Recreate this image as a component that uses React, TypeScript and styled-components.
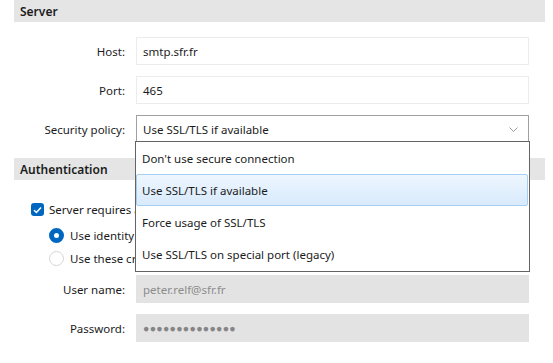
import styled, {createGlobalStyle} from "styled-components";

const GlobalStyle = createGlobalStyle`
  html, body {
    margin: 0;
    padding: 0;
    background: #ffffff;
  }
  body {
    font-family: "Noto Sans", "Open Sans", sans-serif;
    font-size: 11.5px;
    color: #1b1b1b;
  }
`;

const Page = styled.div`
  position: relative;
  width: 553px;
  height: 363px;
  overflow: hidden;
  padding: 0 8px 0 14px;
  box-sizing: border-box;
`;

const SectionHeader = styled.div<{ $gap?: number }>`
  height: 22px;
  margin-top: ${(p) => p.$gap ?? 0}px;
  background: #e5e5e5;
  padding-left: 6px;
  display: flex;
  align-items: center;
  font-size: 12px;
  font-weight: 600;
`;

const Form = styled.div<{ $top: number }>`
  display: grid;
  grid-template-columns: 111px 393px;
  column-gap: 11px;
  row-gap: 11px;
  align-items: center;
  padding-top: ${(p) => p.$top}px;
`;

const Label = styled.label`
  text-align: right;
`;

const Field = styled.div<{ $disabled?: boolean; $select?: boolean }>`
  height: 28px;
  box-sizing: border-box;
  display: flex;
  align-items: center;
  justify-content: space-between;
  padding: 0 10px 0 6px;
  border: 1px solid ${(p) => (p.$select ? "#a0a0a0" : p.$disabled ? "#e3e3e3" : "#ececec")};
  background: ${(p) => (p.$disabled ? "#e3e3e3" : "#ffffff")};
  color: ${(p) => (p.$disabled ? "#8c8c8c" : "#1b1b1b")};
`;

const Dots = styled.span`
  letter-spacing: 0.3px;
  font-size: 10.5px;
  color: #858585;
`;

const AuthBlock = styled.div`
  padding: 23px 0 0 17px;
  display: flex;
  flex-direction: column;
`;

const OptionRow = styled.div<{ $indent?: number; $top?: number }>`
  display: flex;
  align-items: center;
  gap: 5px;
  height: 13px;
  margin-left: ${(p) => p.$indent ?? 0}px;
  margin-top: ${(p) => p.$top ?? 0}px;
`;

const CheckBox = styled.span`
  width: 13px;
  height: 13px;
  border-radius: 3px;
  background: #0067c0;
  display: flex;
  align-items: center;
  justify-content: center;
`;

const Radio = styled.span<{ $checked?: boolean }>`
  width: ${(p) => (p.$checked ? 5 : 13)}px;
  height: ${(p) => (p.$checked ? 5 : 13)}px;
  border-radius: 50%;
  border: ${(p) => (p.$checked ? "5px solid #0067c0" : "1px solid #d6d6d6")};
  background: #ffffff;
  margin-right: 1px;
`;

const Dropdown = styled.div`
  position: absolute;
  left: 135px;
  top: 141px;
  width: 395px;
  box-sizing: border-box;
  border: 1px solid #646464;
  background: #ffffff;
  padding: 0 1px 1px 0;
`;

const Item = styled.div<{ $active?: boolean }>`
  height: 32px;
  box-sizing: border-box;
  display: flex;
  align-items: center;
  padding-left: 5px;
  border: 1px solid ${(p) => (p.$active ? "#a6cdf2" : "transparent")};
  border-radius: 2px;
  background: ${(p) => (p.$active ? "linear-gradient(#eef6fe, #d8eafc)" : "transparent")};
`;

const Chevron = () => (
    <svg width="9" height="5" viewBox="0 0 9 5">
        <polyline points="0.5,0.5 4.5,4.5 8.5,0.5" fill="none" stroke="#9a9a9a" strokeWidth="1"/>
    </svg>
);

const App = () => {
    const options = [
        "Don't use secure connection",
        "Use SSL/TLS if available",
        "Force usage of SSL/TLS",
        "Use SSL/TLS on special port (legacy)",
    ];

    return (
        <Page>
            <GlobalStyle/>
            <SectionHeader>Server</SectionHeader>
            <Form $top={15}>
                <Label>Host:</Label>
                <Field>smtp.sfr.fr</Field>
                <Label>Port:</Label>
                <Field>465</Field>
                <Label>Security policy:</Label>
                <Field $select>
                    Use SSL/TLS if available
                    <Chevron/>
                </Field>
            </Form>

            <SectionHeader $gap={15}>Authentication</SectionHeader>
            <AuthBlock>
                <OptionRow>
                    <CheckBox>
                        <svg width="9" height="8" viewBox="0 0 9 8">
                            <polyline points="1,4.2 3.4,6.4 8,1.4" fill="none" stroke="#fff" strokeWidth="1.5"/>
                        </svg>
                    </CheckBox>
                    Server requires authentication
                </OptionRow>
                <OptionRow $indent={18} $top={13}>
                    <Radio $checked/>
                    Use identity credentials
                </OptionRow>
                <OptionRow $indent={18} $top={10}>
                    <Radio/>
                    Use these credentials:
                </OptionRow>
            </AuthBlock>
            <Form $top={10}>
                <Label>User name:</Label>
                <Field $disabled>peter.relf@sfr.fr</Field>
                <Label>Password:</Label>
                <Field $disabled><Dots>●●●●●●●●●●●●●●</Dots></Field>
            </Form>

            {/* open list of the security policy select */}
            <Dropdown>
                {options.map((o, i) => (
                    <Item key={o} $active={i === 1}>{o}</Item>
                ))}
            </Dropdown>
        </Page>
    );
};

export default App;
